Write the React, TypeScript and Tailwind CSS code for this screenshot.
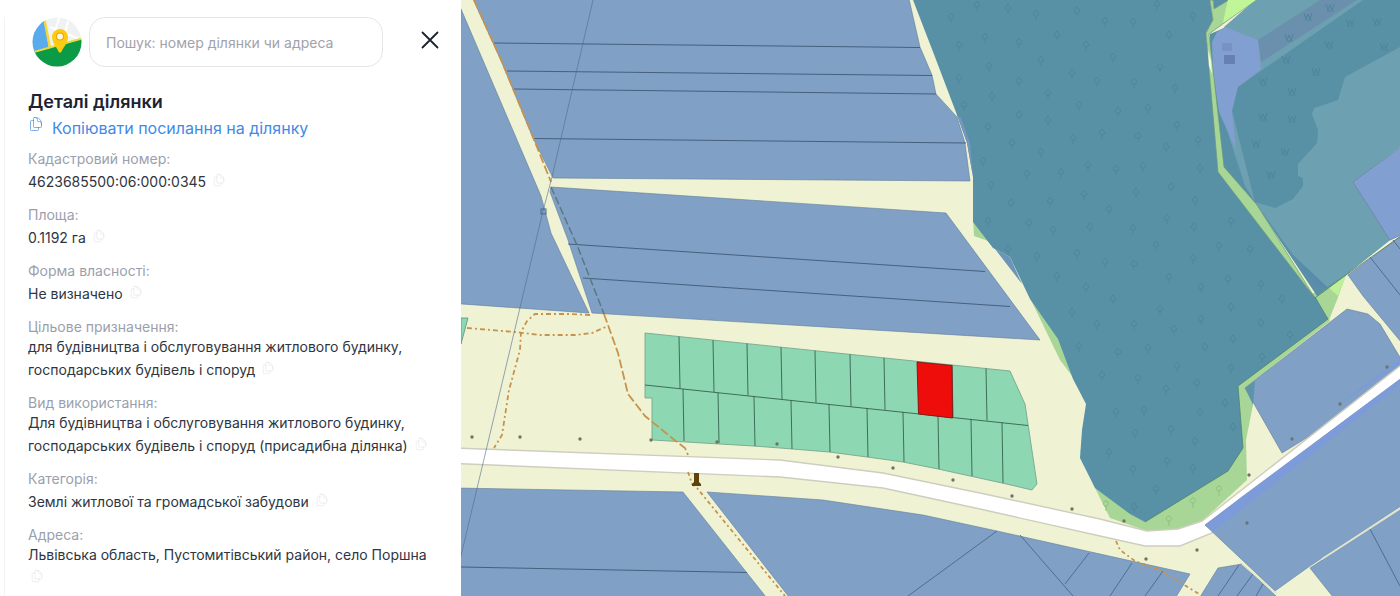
import React from "react";
import { HiOutlineDocumentDuplicate } from "react-icons/hi2";

const fields = [
  { label: "Кадастровий номер:", value: "4623685500:06:000:0345" },
  { label: "Площа:", value: "0.1192 га" },
  { label: "Форма власності:", value: "Не визначено" },
  {
    label: "Цільове призначення:",
    value: "для будівництва і обслуговування житлового будинку, господарських будівель і споруд",
  },
  {
    label: "Вид використання:",
    value: "Для будівництва і обслуговування житлового будинку, господарських будівель і споруд (присадибна ділянка)",
  },
  { label: "Категорія:", value: "Землі житлової та громадської забудови" },
  { label: "Адреса:", value: "Львівська область, Пустомитівський район, село Поршна" },
];

function Logo() {
  return (
    <svg viewBox="0 0 50 50" className="size-[50px] shrink-0" role="img" aria-label="Кадастр">
      <defs>
        <clipPath id="logo-clip">
          <circle cx="25" cy="25" r="24.5" />
        </clipPath>
      </defs>
      <g clipPath="url(#logo-clip)">
        <rect width="50" height="50" fill="#f0f1f3" />
        <path d="M18 10l34 14M28 -2l-6 20M36 4l-3 12" stroke="#ffffff" strokeWidth="2" fill="none" />
        <path d="M0 0H12L17 32L0 37Z" fill="#5aabec" />
        <path d="M12 0L18 31" stroke="#f7d83a" strokeWidth="2.5" />
        <path d="M0 36L50 22V50H0Z" fill="#0b9a45" />
        <path d="M0 35.5L50 21.5" stroke="#e6dc3c" strokeWidth="2" />
        <path
          d="M27 35.500C25 30.500 20 26 20 20a8 8 0 0 1 16 0C36 26 31 30.500 29 35.500Z"
          fill="#fccb12"
        />
        <circle cx="28" cy="19.500" r="4" fill="#ee9f13" />
        <circle cx="28" cy="19.500" r="3" fill="#fff6d8" />
      </g>
    </svg>
  );
}

function CopyButton({ label }: { label: string }) {
  return (
    <button type="button" aria-label={`Копіювати: ${label}`} className="ml-0.5 inline-flex h-[18px] items-end text-[#e2e3e8]">
      <HiOutlineDocumentDuplicate className="size-[14px]" strokeWidth={1} />
    </button>
  );
}

const trees: number[][] = [
  [951, 18], [977, 6], [1008, 9], [1036, 15], [1077, 12], [959, 46], [985, 38], [1019, 43], [1057, 36], [1086, 46],
  [989, 67], [1041, 61], [959, 79], [1019, 82], [1072, 74], [992, 97], [1048, 94], [964, 106], [1019, 116],
  [1079, 106], [988, 128], [1048, 121], [1012, 144], [1073, 139], [983, 162], [1041, 153], [1027, 175],
  [1061, 173], [1088, 166], [991, 186], [1011, 204], [1050, 202], [1084, 195], [988, 222], [1029, 224],
  [1053, 231], [1090, 228], [1008, 250], [1037, 257], [1077, 254], [1057, 277], [1086, 288], [1072, 313], [1079, 347],
  [1157, 5], [1105, 22], [1133, 23], [1193, 17], [1169, 36], [1113, 58], [1160, 68], [1097, 82],
  [1134, 83], [1175, 89], [1118, 112], [1148, 109], [1102, 134], [1177, 126], [1138, 137], [1166, 148], [1198, 141],
  [1116, 170], [1143, 167], [1200, 169], [1136, 193], [1171, 188], [1109, 210], [1195, 201], [1167, 219],
  [1133, 229], [1194, 228], [1231, 222], [1156, 246], [1219, 247], [1250, 250], [1105, 263], [1134, 265],
  [1193, 259], [1169, 278], [1228, 280], [1261, 285], [1201, 288], [1113, 300], [1160, 310], [1231, 308],
  [1282, 300], [1097, 325], [1134, 325], [1201, 320], [1174, 330], [1261, 324], [1233, 340], [1290, 336], [1118, 353],
  [1148, 349], [1205, 348], [1177, 367], [1231, 369], [1262, 358], [1102, 376], [1138, 379], [1197, 384],
  [1166, 390], [1225, 404], [1116, 413], [1144, 411], [1200, 413], [1135, 434], [1171, 430], [1195, 442],
  [1233, 428], [1109, 453], [1167, 462], [1133, 470], [1193, 469], [1156, 490], [1134, 508],
];

const scrub: number[][] = [
  [1289, 37], [1308, 16], [1350, 22], [1377, 21], [1329, 44], [1384, 46], [1286, 59], [1316, 71], [1263, 81],
  [1292, 91], [1263, 116], [1292, 118], [1256, 143], [1285, 151], [1271, 174], [1330, 7],
];

const posts: number[][] = [
  [472, 437], [520, 437], [580, 439], [651, 440], [717, 442], [777, 444], [838, 457], [893, 468], [953, 480],
  [1012, 496], [1072, 509], [1124, 521], [1146, 559], [1197, 550], [1249, 475], [1292, 439], [1340, 404],
  [1387, 367], [1247, 523],
];

const upperDividers = [679, 713, 747, 781, 815, 850, 884, 918, 952, 986];
const lowerDividers: number[][] = [
  [683, 441], [718, 443], [754, 446], [791, 449], [829, 452], [867, 457], [903, 462], [938, 469], [971, 476], [1002, 483],
];

const rowY = (x: number, base: number) => base + (x - 645) * 0.104;

function ParcelMap() {
  return (
    <svg
      viewBox="461 0 939 596"
      preserveAspectRatio="xMinYMin slice"
      className="block size-full"
      role="img"
      aria-label="Кадастрова карта"
    >
      <rect x="461" width="939" height="596" fill="#f0f3d3" />

      {/* Grass margins */}
      <g fill="#a8d696">
        <path d="M973 218L993 248L988 241L974 236Z" />
        <path d="M1030 298L1050 318L1075 380L1060 360Z" />
        <path d="M1080 450L1095 488L1110 518L1147 531L1178 529L1202 521L1247 480L1246 440L1253 405L1245 388L1330 321L1328 316L1236 384L1238 450L1145 515Z" />
        <path d="M1312 294L1346 275L1337 300L1329 320Z" />
      </g>
      <path d="M1328 287L1346 275L1338 296Z" fill="#bdf097" />

      {/* Fields */}
      <g fill="#80a0c6" stroke="#5f7c9c" strokeWidth="0.6">
        <path d="M461 9L541 196L551 233L589 313L455 303.500Z" />
        <path d="M473 -1L493 43L502 63L533 138L553 178L970 181L965 143L957 117L936 94L932 75L920 47L909 -1Z" />
        <path d="M551 187L946 213L1040 340L592 313L568 240L550 192Z" />
        <path d="M455 488L683 492L766 597H455Z" />
        <path d="M707 492L780 497L823 500L923 515L997 531L1100 554L1190 574L1176 597H789Z" />
        <path d="M1218 568L1242 564L1277 597H1200Z" />
        <path d="M1310 568L1401 509V597H1333Z" />
        <path d="M1245 388L1347 309L1368 314L1380 324L1401 359V380L1282 453Z" />
        <path d="M1348 275L1401 236V342L1363 296Z" />
      </g>

      {/* Forest */}
      <path
        d="M913 0L935 57L957 115L967 143L973 177V222L993 248L1010 257L1030 299L1058 339L1073 379L1086 404L1082 430L1080 458L1095 488L1130 514L1145 522L1228 471L1243 448L1238 386L1328 319L1315 297L1219 172L1206 33L1213 20L1210 0Z"
        fill="#5890a6"
      />
      <path d="M995 249L1010 257L1022 284Z" fill="#6b95b8" />
      <path d="M957 115L967 143L973 177L970 143L961 118Z" fill="#7397bd" />
      <path d="M1213 0H1229L1214 9Z" fill="#5890a6" />
      <path
        d="M1256 0H1400V147L1353 182L1390 240L1346 275L1317 296L1255 203L1223 167L1210 60V34L1224 28Z"
        fill="#5890a6"
      />
      <path d="M1255 0H1363L1238 87L1224 27Z" fill="#6da0b0" />
      <path
        d="M1232 111L1255 202L1275 208L1293 199L1303 186V178L1298 176V164L1317 143L1318 130L1312 114L1314 108L1338 100L1345 77L1400 47V147L1353 182L1390 240L1346 275L1327 287L1293 255L1257 205L1245 186L1222 115Z"
        fill="#6da0b0"
      />
      <path d="M1293 255L1327 287L1318 288Z" fill="#5a8bab" />
      <path d="M1258 40L1320 0H1357L1261 62Z" fill="#6b90ae" />
      <path d="M1225 27L1258 40L1261 69L1238 87L1232 111L1236 150L1219 112L1213 70L1212 42L1217 32Z" fill="#829fd2" />
      <rect x="1222" y="43" width="10" height="8" fill="#7891c6" />
      <rect x="1224" y="55" width="11" height="9" fill="#687fb3" />
      <path d="M1353 182L1401 147V235L1390 240Z" fill="#829fd2" stroke="#6781a9" strokeWidth="0.800" />
      <path d="M1245 388L1255 381L1253 405Z" fill="#5f93a8" />
      <path
        d="M1210 0L1213 20L1206 33L1218 172L1315 298L1257 205L1224 167L1209 34L1256 0H1229L1214 9L1213 0Z"
        fill="#a8d696"
        stroke="#6b9a78"
        strokeWidth="0.700"
      />
      <path d="M1228 0H1256L1223 23L1226 8Z" fill="#c0f697" />
      <path d="M1208 50L1211 60L1212 74L1209 66Z" fill="#f2f7ee" />
      <path d="M1315 298L1346 275L1401 236" fill="none" stroke="#527762" strokeWidth="0.800" />
      <path d="M1145 522L1228 471L1243 448L1238 386L1328 319L1315 297" fill="none" stroke="#4d846e" strokeWidth="0.800" />
      <g fill="none" stroke="#4e879d" strokeWidth="1">
        {trees.map(([x, y], i) => (
          <path key={i} d={`M${x} ${y + 5}v-4c-4 0 -3 -3 0 -6c3 3 4 6 0 6`} />
        ))}
      </g>
      <g fill="none" stroke="#4f859b" strokeWidth="1">
        {scrub.map(([x, y], i) => (
          <path key={i} d={`M${x - 4} ${y - 3}l2 6l2 -5l2 5l2 -6M${x - 3} ${y + 4}h7`} />
        ))}
      </g>
      <path
        d="M1219 496v-5c-4 0 -3 -5 0 -5s3 5 0 5M1193 508v-5c-4 0 -3 -5 0 -5s3 5 0 5M1169 526v-5c-4 0 -3 -5 0 -5s3 5 0 5M1106 511v-5c-4 0 -3 -5 0 -5s3 5 0 5"
        fill="none"
        stroke="#8fbf85"
      />

      {/* Field boundaries */}
      <g fill="none" stroke="#3f5876" strokeWidth="0.900">
        <path d="M494 43L920 47.500M507 71L932 75.500M513 89L936 94M533 138.500L966 143" />
        <path d="M568 244L985 271.500M583 278L1010 306.500M461 567L747 572.500" />
      </g>
      <g fill="none" stroke="#4a688e" strokeWidth="0.900">
        <path d="M997 531L908 596M1020 535L1073 596M1089 553L1065 584M1132 563L1110 596M1163 571L1145 596" />
        <path d="M1239 565L1218 596M1253 574L1237 596M1263 584L1256 596M1370 529L1400 586M1370 257L1400 295M1393 240L1400 249" />
      </g>

      {/* Building parcels */}
      <path d="M461 318H468L461 344Z" fill="#8ed7b3" stroke="#5b9379" strokeWidth="0.800" />
      <path
        d="M645 333L1010 371L1025 404L1037 484L1032 490L1002 483L970 476L938 469L903 462L867 457L829 452L780 448L753 446L652 440V398H645Z"
        fill="#8ed7b3"
        stroke="#6fa088"
        strokeWidth="0.800"
      />
      <g fill="none" stroke="#35624f" strokeWidth="0.900">
        <path d="M645 385L1028 425.500" />
        {upperDividers.map((x) => (
          <path key={x} d={`M${x} ${rowY(x, 333)}L${x + 1} ${rowY(x, 385)}`} />
        ))}
        {lowerDividers.map(([x, y]) => (
          <path key={x} d={`M${x} ${rowY(x, 385)}L${x + 1} ${y}`} />
        ))}
      </g>
      <path d="M917 362L952 365.500L952.500 418L918.500 414Z" fill="#ef0d0b" stroke="#7f1515" strokeWidth="0.900" />

      {/* Road */}
      <path
        d="M455 448L780 460L883 473L980 493L1100 519L1147 531L1178 529L1202 521L1405 362V376L1212 533L1180 546H1145L1100 536L980 509L883 488L780 477L455 463.500Z"
        fill="#ffffff"
        stroke="#cfcdbf"
        strokeWidth="1.400"
      />
      <path d="M1205 525L1401 378.500V506L1310 566L1275 591Z" fill="#80a0c6" stroke="#6986a9" strokeWidth="0.600" />
      <path d="M1205 525L1240 498L1400 379V385L1214 531Z" fill="#7c9bd8" />
      <path d="M1338 405L1400 358V364Z" fill="#7c9bd8" />
      <path d="M1401 508L1322 559" stroke="#dce2cf" strokeWidth="2" />
      <path d="M1242 564L1277 594" stroke="#dfe5cf" strokeWidth="1.500" />

      {/* Trails */}
      <g fill="none" stroke="#c7934c" strokeWidth="1.800">
        <path d="M474 0L502 62L535 142L551 182" strokeDasharray="9 3" />
        <path d="M604 314L618 353L628 394L645 416L672 438L685 448L688 455" strokeDasharray="9 3" />
        <path d="M467 328L515 332L540 335L575 335L592 333L608 326M590 315L570 314H535L527 321L521 332L520 350L509 390L502 435L494 448" strokeDasharray="5 3 2 3" />
        <path d="M688 472L692 484L697 488L785 596M1116 541L1120 550L1135 561L1160 570L1199 594" strokeDasharray="4 3 2 3" />
      </g>
      <path d="M551 187L577 245L597 296L604 314" fill="none" stroke="#56777f" strokeWidth="1.400" strokeDasharray="8 3" />

      {/* Power line */}
      <path d="M593 0L552 177L543 211L460 560" fill="none" stroke="#526c8c" strokeOpacity="0.600" strokeWidth="1" />
      <rect x="541" y="209" width="5" height="5" fill="none" stroke="#4d6787" />
      <g fill="#6f7464">
        {posts.map(([x, y], i) => (
          <circle key={i} cx={x} cy={y} r="1.700" />
        ))}
      </g>
      <path d="M694 473h5v9l2 2v2h-9v-2l2-2Z" fill="#5e430c" />
    </svg>
  );
}

export default function App() {
  return (
    <main className="flex min-h-screen bg-white font-['Inter',sans-serif]">
      <aside className="w-[461px] shrink-0 pt-[17px] pl-1">
        <div className="h-full border-l border-[#f3f3f5] pr-5 pl-[23px]">
          <header className="flex items-center">
            <div className="ml-1">
              <Logo />
            </div>
            <input
              type="search"
              aria-label="Пошук"
              placeholder="Пошук: номер ділянки чи адреса"
              className="ml-[7px] h-[50px] w-[294px] rounded-2xl border border-[#e6e6ea] px-4 text-sm text-gray-800 outline-none placeholder:text-[#a2a2ab]"
            />
            <button type="button" aria-label="Закрити" className="mb-1 ml-auto p-0.5 text-[#1d2230]">
              <svg viewBox="0 0 18 18" className="size-[18px]" fill="none" stroke="currentColor" strokeWidth="1.800" strokeLinecap="round">
                <path d="M1.500 1.500L16.500 16.500M16.500 1.500L1.500 16.500" />
              </svg>
            </button>
          </header>

          <h1 className="mt-[21px] text-lg leading-7 font-semibold text-[#1c2231]">Деталі ділянки</h1>
          <a href="#copy" className="flex text-base leading-6 text-[#3f8ae6]">
            <HiOutlineDocumentDuplicate className="mr-2 size-4" strokeWidth={1} />
            Копіювати посилання на ділянку
          </a>

          <dl className="mt-[9px] text-sm leading-5">
            {fields.map(({ label, value }) => (
              <div key={label} className="mb-[13px] last:mb-0">
                <dt className="text-[#9b9fad]">{label}</dt>
                <dd className="text-[#2f3541]">
                  {value} <CopyButton label={label} />
                </dd>
              </div>
            ))}
          </dl>
        </div>
      </aside>
      <section className="relative min-w-0 flex-1 overflow-hidden">
        <div className="absolute inset-0">
          <ParcelMap />
        </div>
      </section>
    </main>
  );
}
